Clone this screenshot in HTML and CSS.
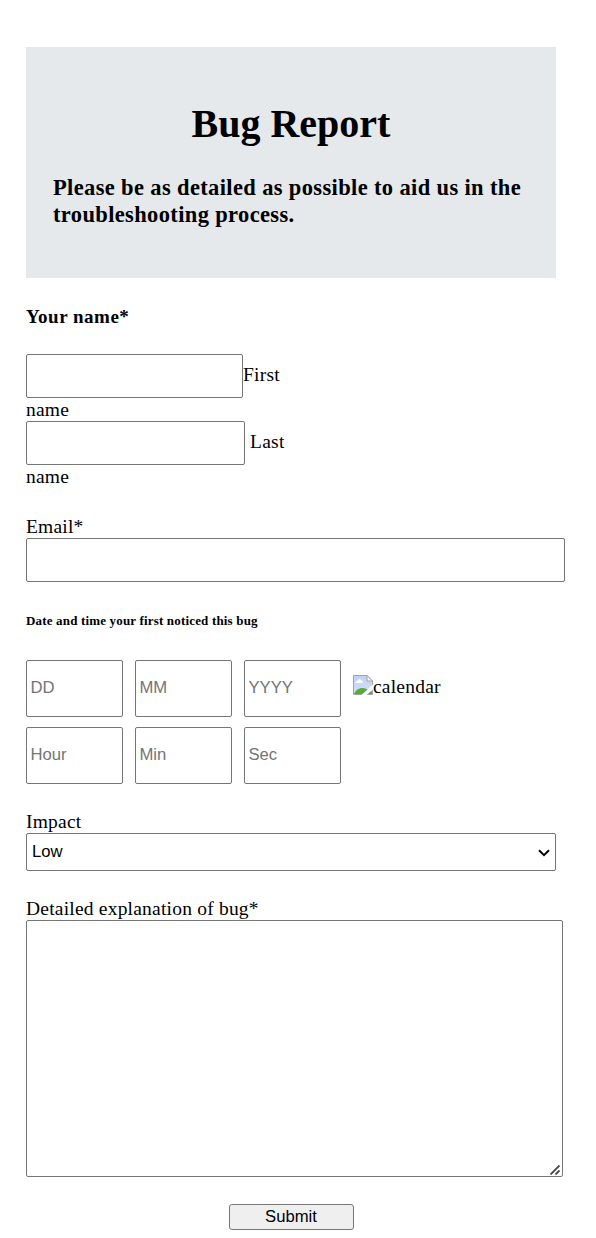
FILE: index.html
```html
<!DOCTYPE html>
<html lang="en">
<head>
<meta charset="utf-8">
<title>Bug Report</title>
<link rel="stylesheet" href="styles.css">
</head>
<body>
<form class="report">
  <header class="intro">
    <h1 class="title">Bug Report</h1>
    <h3 class="subtitle">Please be as detailed as possible to aid us in the troubleshooting process.</h3>
  </header>
  <h4 class="name-heading">Your name*</h4>
  <div class="names">
    <div class="name-row"><input class="field first" type="text" id="first"><label for="first">First name</label></div>
    <div class="name-row"><input class="field last" type="text" id="last"> <label for="last">Last name</label></div>
  </div>
  <div class="group email-group">
    <label class="label" for="email">Email*</label>
    <input class="field email" type="text" id="email">
  </div>
  <h6 class="date-heading">Date and time your first noticed this bug</h6>
  <div class="when">
    <input class="field part" type="text" placeholder="DD">
    <input class="field part" type="text" placeholder="MM">
    <input class="field part" type="text" placeholder="YYYY">
    <span class="calendar"><svg class="picture" width="20" height="20" viewBox="0 0 20 20">
      <defs><linearGradient id="sky" x1="0" y1="0" x2="0" y2="1"><stop offset="0" stop-color="#bfd2f3"/><stop offset="1" stop-color="#d2e0f8"/></linearGradient></defs>
      <path d="M.5.5h13.500l5.500 5.500v13.500H.5z" fill="url(#sky)"/>
      <path d="M2.500 8a2 2 0 0 1 1.700-2.200 2.400 2.400 0 0 1 4.300-.3A1.700 1.700 0 0 1 9.500 8z" fill="#fff"/>
      <path d="M1 19c1.500-3.500 4.500-6 8.500-6 2.500 0 4.500 1 6 2.500l4 1v3z" fill="#56ac35"/>
      <path d="M.5 19.500V.5H14l5.500 5.500v13.500z" fill="none" stroke="#9da4b0"/>
      <path d="M14 .5V6h5.500z" fill="#f5f5f5" stroke="#a4a4a4"/>
      <path d="M8.500 20L20 9.500v5L13.500 20z" fill="#fff"/>
    </svg>calendar</span>
    <input class="field part" type="text" placeholder="Hour">
    <input class="field part" type="text" placeholder="Min">
    <input class="field part" type="text" placeholder="Sec">
  </div>
  <div class="group impact-group">
    <label class="label" for="impact">Impact</label>
    <div class="select-box">
      <select class="field impact" id="impact"><option>Low</option><option>Medium</option><option>High</option></select>
      <svg class="chevron" width="12" height="8" viewBox="0 0 12 8"><path d="M1 1.200l5 5 5-5" fill="none" stroke="#000" stroke-width="2"/></svg>
    </div>
  </div>
  <div class="group detail-group">
    <label class="label" for="detail">Detailed explanation of bug*</label>
    <div class="detail-box">
      <textarea class="field detail" id="detail"></textarea>
      <svg class="grip" width="10" height="10" viewBox="0 0 10 10"><path d="M.5 9.500l9-9M5.500 9.500l4-4" stroke="#444" stroke-width="1.800"/></svg>
    </div>
  </div>
  <button class="submit" type="button">Submit</button>
</form>
</body>
</html>
```

FILE: styles.css
```css
* { box-sizing: border-box; }
body {
  margin: 0;
  background: #fff;
  color: #000;
  font: 19.5px "Liberation Serif", "Times New Roman", serif;
  line-height: 23px;
  letter-spacing: .21px;
}
.report { display: flex; flex-direction: column; align-items: flex-start; width: 556px; padding: 47px 0 0 26px; }
.intro { width: 530px; height: 231px; padding: 54px 27px 27px; background: #e5e9ec; }
.title { margin: 0 0 27px; font-size: 40px; line-height: 46px; letter-spacing: 0; text-align: center; }
.subtitle { margin: 0; font-size: 22.5px; line-height: 27px; letter-spacing: .36px; }
.name-heading { margin: 27px 0 26px; font-size: 19px; letter-spacing: .5px; }
.names { width: 265px; }
.field {
  margin: 0;
  border: 1px solid #767676;
  border-radius: 2px;
  background: #fff;
  color: #000;
  font: 16.667px "Liberation Sans", Arial, sans-serif;
  letter-spacing: 0;
  padding: 1px 4px;
  height: 44px;
  outline: none;
}
.field::placeholder { color: #757575; }
.first { width: 217px; }
.last { width: 219px; }
.group { display: flex; flex-direction: column; }
.email-group { margin-top: 27px; }
.email { width: 539px; }
.date-heading { margin: 31px 0; font-size: 13px; line-height: 16px; letter-spacing: .17px; }
.when { display: grid; grid-template-columns: 97px 97px 97px auto; gap: 10px 12px; }
.part { width: 97px; height: 57px; padding: 0 4px 2px 3.5px; }
.calendar { display: flex; height: 20px; margin-top: 15px; line-height: 24px; }
.impact-group { margin-top: 26px; }
.select-box, .detail-box { position: relative; }
.impact { display: block; appearance: none; width: 530px; height: 38px; padding: 0 5px 2px; }
.chevron { position: absolute; right: 6px; top: 16px; }
.detail-group { margin-top: 26px; }
.detail { display: block; width: 537px; height: 257px; resize: none; }
.grip { position: absolute; right: 3px; bottom: 2px; }
.submit {
  align-self: center;
  width: 125px;
  height: 26px;
  margin: 27px 0 8px;
  padding: 0;
  border: 1px solid #767676;
  border-radius: 3px;
  background: #efefef;
  color: #000;
  font: 16.667px "Liberation Sans", Arial, sans-serif;
  letter-spacing: 0;
}
```
